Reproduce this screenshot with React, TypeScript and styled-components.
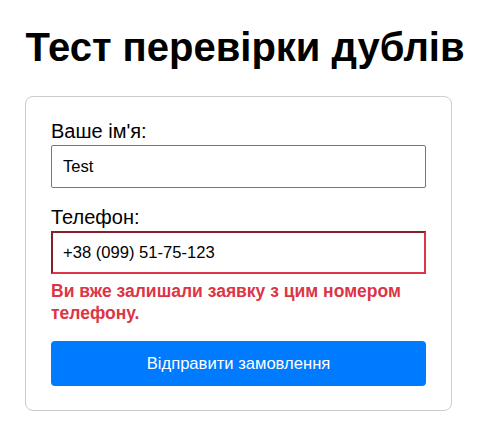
import React from "react";
import styled, { createGlobalStyle } from "styled-components";

const GlobalStyle = createGlobalStyle`
  html, body {
    margin: 0;
    padding: 0;
    background: #ffffff;
    font-family: "Liberation Sans", Arial, sans-serif;
    color: #000000;
  }
`;

const Page = styled.div`
  display: flex;
  flex-direction: column;
  align-items: flex-start;
  padding: 24px 0 0;
`;

const Title = styled.h1`
  align-self: stretch;
  margin: 0 0 26px;
  text-align: center;
  font-size: 40px;
  font-weight: 700;
  line-height: 46px;
`;

const Card = styled.form`
  box-sizing: border-box;
  width: 427px;
  margin-left: 25px;
  padding: 23px 25px 24px;
  border: 1px solid #cccccc;
  border-radius: 8px;
  display: flex;
  flex-direction: column;
`;

const Field = styled.div<{ $gap: number }>`
  display: flex;
  flex-direction: column;
  margin-bottom: ${(p) => p.$gap}px;
`;

const Label = styled.label`
  font-size: 20px;
  line-height: 23px;
  margin-bottom: 2px;
`;

/* Plain field: thin grey frame; invalid field: red inset frame */
const Input = styled.input<{ $invalid?: boolean }>`
  box-sizing: border-box;
  width: 100%;
  height: 43px;
  padding: 0 10px;
  font-family: "Liberation Sans", Arial, sans-serif;
  font-size: 16.6px;
  color: #000000;
  background: #ffffff;
  outline: none;
  ${(p) =>
    p.$invalid
      ? "border: 2px inset #dc3545; border-radius: 0;"
      : "border: 1px solid #767676; border-radius: 2px; padding: 0 11px;"}
`;

const ErrorText = styled.div`
  margin-top: 7px;
  color: #dc3545;
  font-size: 17.5px;
  font-weight: 700;
  line-height: 21.7px;
`;

const SubmitButton = styled.button`
  box-sizing: border-box;
  width: 100%;
  height: 45px;
  margin-top: 17px;
  border: none;
  border-radius: 4px;
  background: #007bff;
  color: #ffffff;
  font-family: "Liberation Sans", Arial, sans-serif;
  font-size: 16.6px;
  cursor: pointer;
`;

export default function App() {
  return (
    <>
      <GlobalStyle />
      <Page>
        <Title>Тест перевірки дублів</Title>
        <Card onSubmit={(e) => e.preventDefault()}>
          <Field $gap={18}>
            <Label htmlFor="name">Ваше ім'я:</Label>
            <Input id="name" type="text" defaultValue="Test" />
          </Field>
          <Field $gap={0}>
            <Label htmlFor="phone">Телефон:</Label>
            <Input id="phone" type="tel" defaultValue="+38 (099) 51-75-123" $invalid />
            <ErrorText>Ви вже залишали заявку з цим номером телефону.</ErrorText>
          </Field>
          <SubmitButton type="submit">Відправити замовлення</SubmitButton>
        </Card>
      </Page>
    </>
  );
}
